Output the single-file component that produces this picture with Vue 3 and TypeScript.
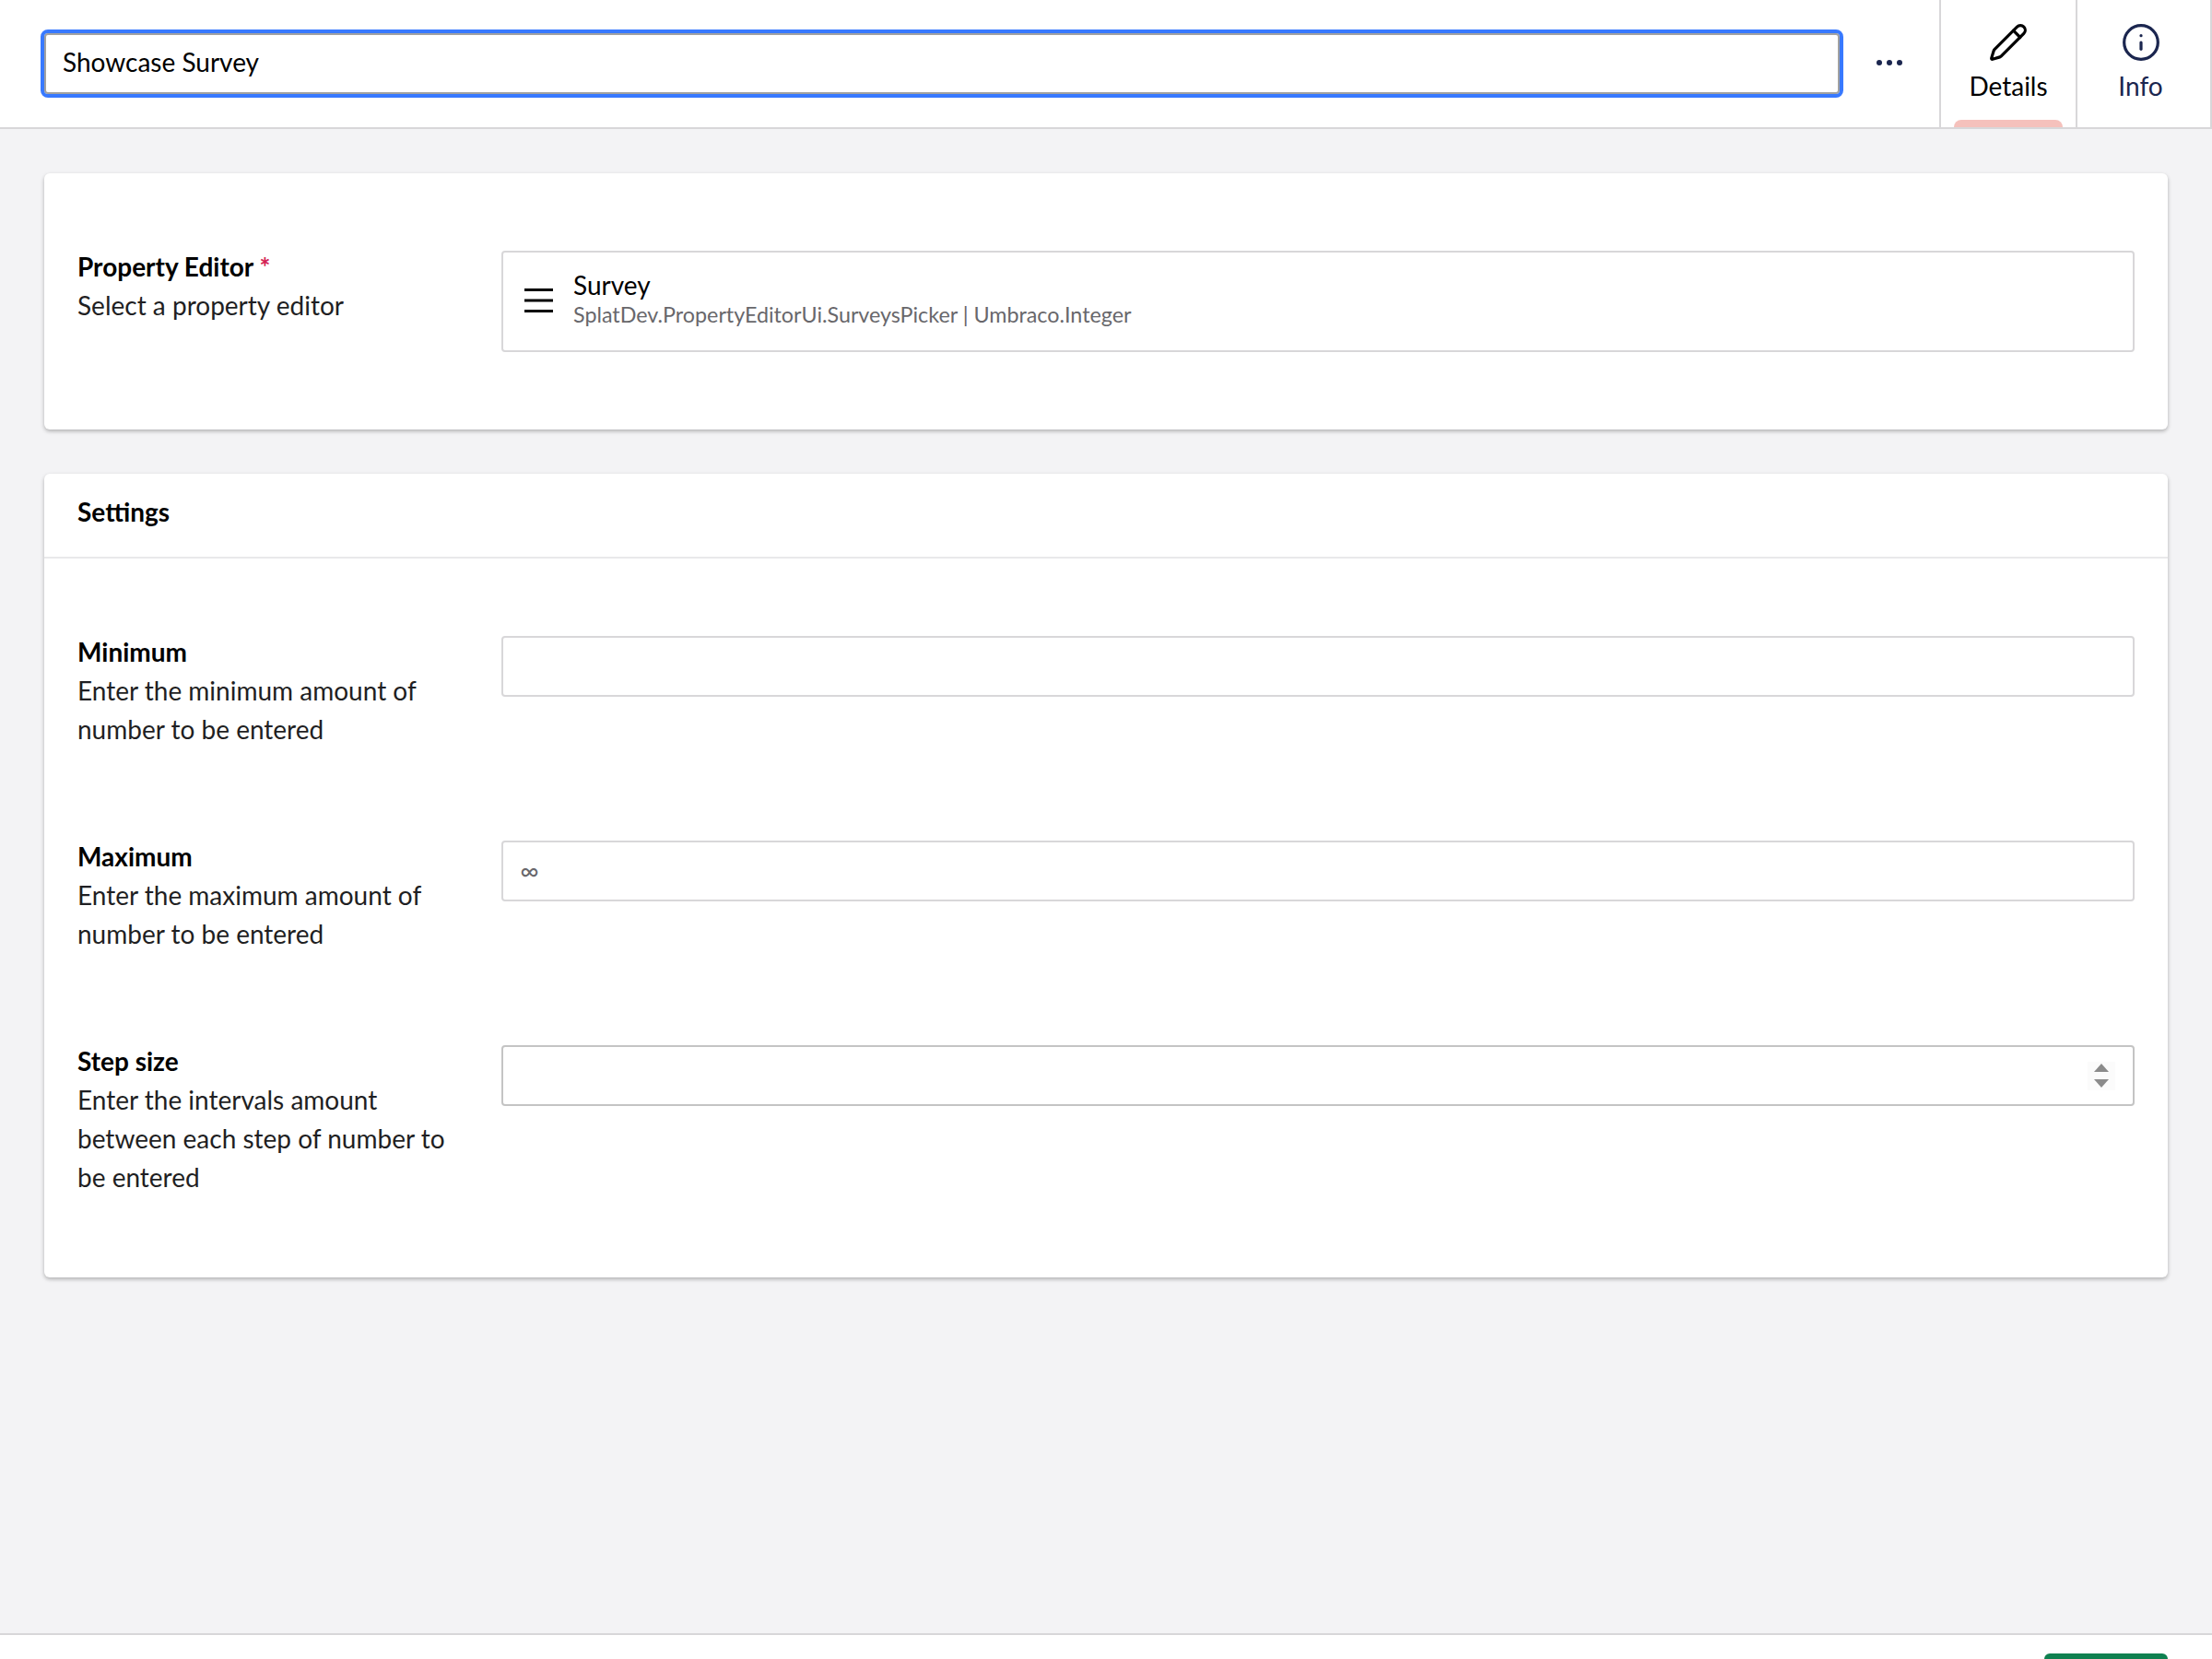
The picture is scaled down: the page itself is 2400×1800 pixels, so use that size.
<script setup lang="ts">
import { ref } from 'vue'

interface Setting {
  name: string
  description: string
  placeholder?: string
}

const title = ref('Showcase Survey')

const settings: Setting[] = [
  { name: 'Minimum', description: 'Enter the minimum amount of number to be entered' },
  { name: 'Maximum', description: 'Enter the maximum amount of number to be entered', placeholder: '∞' },
]
</script>

<template>
  <div class="page">
    <header class="top">
      <input v-model="title" class="title" type="text" />
      <button class="more" type="button" aria-label="More">
        <span></span><span></span><span></span>
      </button>
      <nav class="tabs">
        <a class="tab active">
          <svg class="icon" viewBox="0 0 24 24">
            <path d="M21.174 6.812a1 1 0 0 0-3.986-3.987L3.842 16.174a2 2 0 0 0-.5.83l-1.321 4.352a.5.5 0 0 0 .623.622l4.353-1.32a2 2 0 0 0 .83-.497z" />
            <path d="m15 5 4 4" />
          </svg>
          <span>Details</span>
        </a>
        <a class="tab">
          <svg class="icon" viewBox="0 0 24 24">
            <circle cx="12" cy="12" r="10" />
            <path d="M12 16v-4" />
            <path d="M12 8h.01" />
          </svg>
          <span>Info</span>
        </a>
      </nav>
    </header>

    <main class="content">
      <section class="card">
        <div class="card-body first">
          <div class="row">
            <div class="label">
              <strong>Property Editor <i class="req">*</i></strong>
              <p>Select a property editor</p>
            </div>
            <div class="picked">
              <svg class="menu" viewBox="0 0 31 26">
                <path d="M0 1.5h31M0 13h31M0 24.5h31" />
              </svg>
              <div class="picked-text">
                <div class="picked-name">Survey</div>
                <div class="picked-alias">SplatDev.PropertyEditorUi.SurveysPicker | Umbraco.Integer</div>
              </div>
            </div>
          </div>
        </div>
      </section>

      <section class="card">
        <h2 class="card-head">Settings</h2>
        <div class="card-body">
          <div v-for="s in settings" :key="s.name" class="row">
            <div class="label">
              <strong>{{ s.name }}</strong>
              <p>{{ s.description }}</p>
            </div>
            <input class="field" type="text" :placeholder="s.placeholder" />
          </div>
          <div class="row">
            <div class="label">
              <strong>Step size</strong>
              <p>Enter the intervals amount between each step of number to be entered</p>
            </div>
            <div class="field step">
              <input type="text" />
              <span class="spinner"><b class="up"></b><b class="down"></b></span>
            </div>
          </div>
        </div>
      </section>
    </main>

    <footer class="bottom">
      <button class="save" type="button"></button>
    </footer>
  </div>
</template>

<style>
html, body {
  margin: 0;
  background: #f3f3f5;
}
</style>

<style scoped>
.page {
  display: flex;
  flex-direction: column;
  height: 1800px;
  overflow: hidden;
  font-family: Lato, "Liberation Sans", sans-serif;
  font-size: 28px;
  line-height: 42px;
  color: #000;
  background: #f3f3f5;
}

.top {
  display: flex;
  align-items: stretch;
  height: 140px;
  box-sizing: border-box;
  flex: none;
  background: #fff;
  border-bottom: 2px solid #d8d7d9;
  padding-left: 48px;
}

.title {
  flex: 1;
  min-width: 0;
  height: 66px;
  margin: 36px 0 0;
  padding: 0 18px 4px;
  box-sizing: border-box;
  border: 2px solid #a1a1a1;
  border-radius: 4px;
  outline: 4px solid #3879ff;
  outline-offset: 0;
  font: inherit;
  color: #000;
}

.more {
  display: flex;
  align-items: center;
  justify-content: center;
  gap: 5px;
  flex: none;
  width: 108px;
  padding: 0 0 3px;
  border: 0;
  background: none;
}

.more span {
  width: 6px;
  height: 6px;
  border-radius: 50%;
  background: #1b264f;
}

.tabs {
  display: flex;
  flex: none;
}

.tab {
  position: relative;
  display: flex;
  flex-direction: column;
  align-items: center;
  box-sizing: border-box;
  width: 148px;
  padding-top: 24px;
  border-left: 2px solid #d8d7d9;
  color: #1b264f;
  line-height: 36px;
}

.tab:last-child {
  padding-right: 7px;
  border-right: 2px solid #d8d7d9;
}

.tab.active {
  color: #000;
}

.tab.active::after {
  content: "";
  position: absolute;
  left: 14px;
  bottom: 0;
  width: 118px;
  height: 8px;
  border-radius: 8px 8px 0 0;
  background: #f5c1bc;
}

.icon {
  width: 44px;
  height: 44px;
  margin-bottom: 7px;
  fill: none;
  stroke: currentColor;
  stroke-width: 1.75;
  stroke-linecap: round;
  stroke-linejoin: round;
}

.content {
  flex: 1;
  display: flex;
  flex-direction: column;
  gap: 48px;
  padding: 48px 48px 0;
}

.card {
  background: #fff;
  border-radius: 6px;
  box-shadow: 0 2px 4px rgba(0, 0, 0, 0.28);
}

.card-head {
  margin: 0;
  padding: 20px 36px 0;
  height: 92px;
  box-sizing: border-box;
  border-bottom: 2px solid #e9e9eb;
  font-size: 28px;
  line-height: 42px;
  font-weight: 700;
}

.card-body {
  display: flex;
  flex-direction: column;
  gap: 96px;
  padding: 80px 36px 88px;
}

.card-body.first {
  padding-bottom: 84px;
}

.row {
  display: grid;
  grid-template-columns: 460px 1fr;
  align-items: start;
}

.label strong {
  display: block;
  font-weight: 700;
}

.label p {
  margin: 0;
  max-width: 420px;
  color: #1f1f23;
}

.req {
  font-style: normal;
  color: #d42054;
}

.picked {
  display: flex;
  align-items: center;
  box-sizing: border-box;
  height: 110px;
  margin-top: 4px;
  padding: 0 0 7px 23px;
  border: 2px solid #d8d7d9;
  border-radius: 4px;
}

.menu {
  flex: none;
  width: 31px;
  height: 26px;
  margin: 5px 22px 0 0;
  fill: none;
  stroke: #000;
  stroke-width: 3;
}

.picked-name {
  line-height: 36px;
}

.picked-alias {
  font-size: 23.3px;
  line-height: 29px;
  color: #68676b;
}

.field {
  display: block;
  box-sizing: border-box;
  width: 100%;
  height: 66px;
  margin-top: 4px;
  padding: 0 18px 2px;
  border: 2px solid #d8d7d9;
  border-radius: 4px;
  background: #fff;
  font: inherit;
  outline: none;
}

.field::placeholder {
  color: #68676b;
  font-size: 28px;
}

.step {
  display: flex;
  align-items: center;
  border-color: #c4c4c4;
  padding: 0 18px;
}

.step input {
  flex: 1;
  min-width: 0;
  border: 0;
  padding: 0;
  font: inherit;
  outline: none;
}

.spinner {
  display: flex;
  flex-direction: column;
  align-items: center;
  justify-content: center;
  gap: 8px;
  flex: none;
  width: 30px;
  height: 31px;
  margin-right: 1px;
  background: #fbfbfb;
}

.spinner b {
  width: 0;
  height: 0;
  border-left: 8px solid transparent;
  border-right: 8px solid transparent;
}

.spinner .up {
  border-bottom: 9px solid #8b8b8b;
}

.spinner .down {
  border-top: 9px solid #8b8b8b;
}

.bottom {
  display: flex;
  justify-content: flex-end;
  flex: none;
  height: 28px;
  box-sizing: border-box;
  padding: 20px 48px 0;
  background: #fff;
  border-top: 2px solid #d8d7d9;
}

.save {
  width: 134px;
  height: 60px;
  padding: 0;
  border: 0;
  border-radius: 6px;
  background: #0f8050;
}
</style>
